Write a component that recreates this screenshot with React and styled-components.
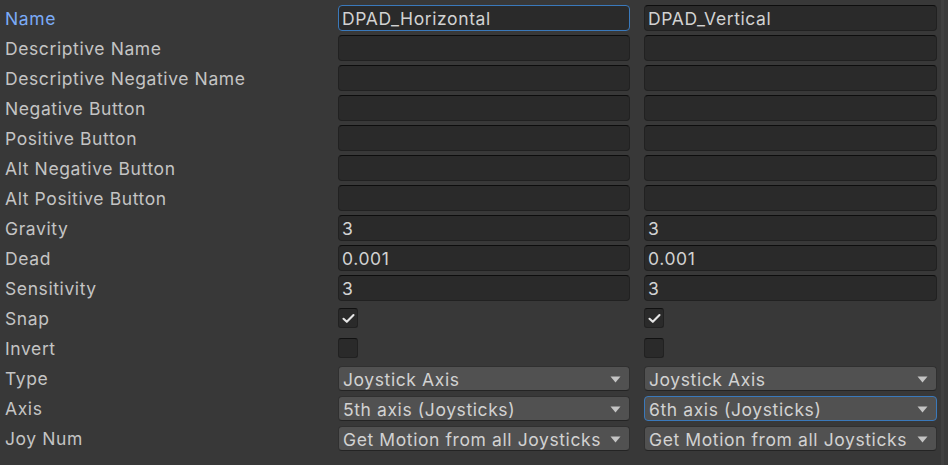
import React from "react";
import styled, { createGlobalStyle } from "styled-components";

const GlobalStyle = createGlobalStyle`
  html, body {
    margin: 0;
    padding: 0;
    background: #383838;
  }
  body {
    font-family: Inter, "Noto Sans", sans-serif;
  }
`;

const rows = [
  { label: "Name", kind: "text", values: ["DPAD_Horizontal", "DPAD_Vertical"], focus: [true, false] },
  { label: "Descriptive Name", kind: "text", values: ["", ""] },
  { label: "Descriptive Negative Name", kind: "text", values: ["", ""] },
  { label: "Negative Button", kind: "text", values: ["", ""] },
  { label: "Positive Button", kind: "text", values: ["", ""] },
  { label: "Alt Negative Button", kind: "text", values: ["", ""] },
  { label: "Alt Positive Button", kind: "text", values: ["", ""] },
  { label: "Gravity", kind: "text", values: ["3", "3"] },
  { label: "Dead", kind: "text", values: ["0.001", "0.001"] },
  { label: "Sensitivity", kind: "text", values: ["3", "3"] },
  { label: "Snap", kind: "check", values: [true, true] },
  { label: "Invert", kind: "check", values: [false, false] },
  { label: "Type", kind: "select", values: ["Joystick Axis", "Joystick Axis"] },
  { label: "Axis", kind: "select", values: ["5th axis (Joysticks)", "6th axis (Joysticks)"], focus: [false, true] },
  { label: "Joy Num", kind: "select", values: ["Get Motion from all Joysticks", "Get Motion from all Joysticks"] },
];

const Check = () => (
  <svg width="13" height="11" viewBox="0 0 13 11">
    <path d="M1.5 5.8 L4.8 8.8 L11.5 2" fill="none" stroke="#e6e6e6" strokeWidth="2.1" strokeLinecap="round" strokeLinejoin="round" />
  </svg>
);

const Arrow = () => (
  <svg width="11" height="7" viewBox="0 0 11 7">
    <path d="M0.5 0.5 L10.5 0.5 L5.5 6.5 Z" fill="#c4c4c4" />
  </svg>
);

const Cell = ({ row, i }) => {
  const value = row.values[i];
  const focused = row.focus ? row.focus[i] : false;
  if (row.kind === "check") {
    return (
      <CellBox>
        <CheckBox>{value && <Check />}</CheckBox>
      </CellBox>
    );
  }
  if (row.kind === "select") {
    return (
      <CellBox>
        <Select $focused={focused}>
          <span>{value}</span>
          <Arrow />
        </Select>
      </CellBox>
    );
  }
  return (
    <CellBox>
      <Field $focused={focused}>{value}</Field>
    </CellBox>
  );
};

const App = () => {
  return (
    <>
      <GlobalStyle />
      <Panel>
        <Rows>
          {rows.map((row) => (
            <Row key={row.label}>
              <Label $active={row.label === "Name"}>{row.label}</Label>
              <Values>
                <Cell row={row} i={0} />
                <Cell row={row} i={1} />
              </Values>
            </Row>
          ))}
        </Rows>
        <Scrollbar />
      </Panel>
    </>
  );
};

const Panel = styled.div`
  display: flex;
  width: 948px;
  height: 465px;
  background: #383838;
  overflow: hidden;
`;

const Rows = styled.div`
  flex: 1;
  display: flex;
  flex-direction: column;
  gap: 4px;
  padding: 5px 0 0 5px;
`;

const Row = styled.div`
  display: flex;
  height: 26px;
  align-items: center;
`;

const Label = styled.div`
  width: 333px;
  flex-shrink: 0;
  padding-top: 1px;
  font-size: 17.5px;
  letter-spacing: 0.6px;
  color: ${(p) => (p.$active ? "#7babf7" : "#c4c4c4")};
  white-space: nowrap;
`;

const Values = styled.div`
  display: grid;
  grid-template-columns: 292px 293px;
  column-gap: 14px;
`;

const CellBox = styled.div`
  display: flex;
  align-items: center;
  height: 26px;
`;

const Field = styled.div`
  box-sizing: border-box;
  width: 100%;
  height: 26px;
  background: #2a2a2a;
  border: 1px solid ${(p) => (p.$focused ? "#3a79bb" : "#212121")};
  border-top-color: ${(p) => (p.$focused ? "#3a79bb" : "#0d0d0d")};
  border-radius: 4px;
  padding: 1px 3px 0;
  font-size: 17.5px;
  letter-spacing: 0.6px;
  line-height: 23px;
  color: #d2d2d2;
  white-space: nowrap;
  overflow: hidden;
`;

const CheckBox = styled.div`
  box-sizing: border-box;
  width: 20px;
  height: 20px;
  background: #2a2a2a;
  border: 1px solid #212121;
  border-top-color: #111;
  border-radius: 3px;
  display: flex;
  align-items: center;
  justify-content: center;
`;

const Select = styled.div`
  box-sizing: border-box;
  width: 100%;
  height: 25px;
  margin-top: 1px;
  background: #515151;
  border: 1px solid ${(p) => (p.$focused ? "#3a79bb" : "#303030")};
  border-bottom-color: ${(p) => (p.$focused ? "#3a79bb" : "#242424")};
  border-radius: 4px;
  padding: 1px 8px 0 4px;
  display: flex;
  align-items: center;
  justify-content: space-between;
  font-size: 17.5px;
  letter-spacing: 0.6px;
  color: #d2d2d2;
  white-space: nowrap;

  span {
    overflow: hidden;
  }
`;

const Scrollbar = styled.div`
  width: 7px;
  height: 100%;
  border-left: 3px solid #404040;
  background: #3a3a3a;
  box-sizing: border-box;
`;

export default App;
